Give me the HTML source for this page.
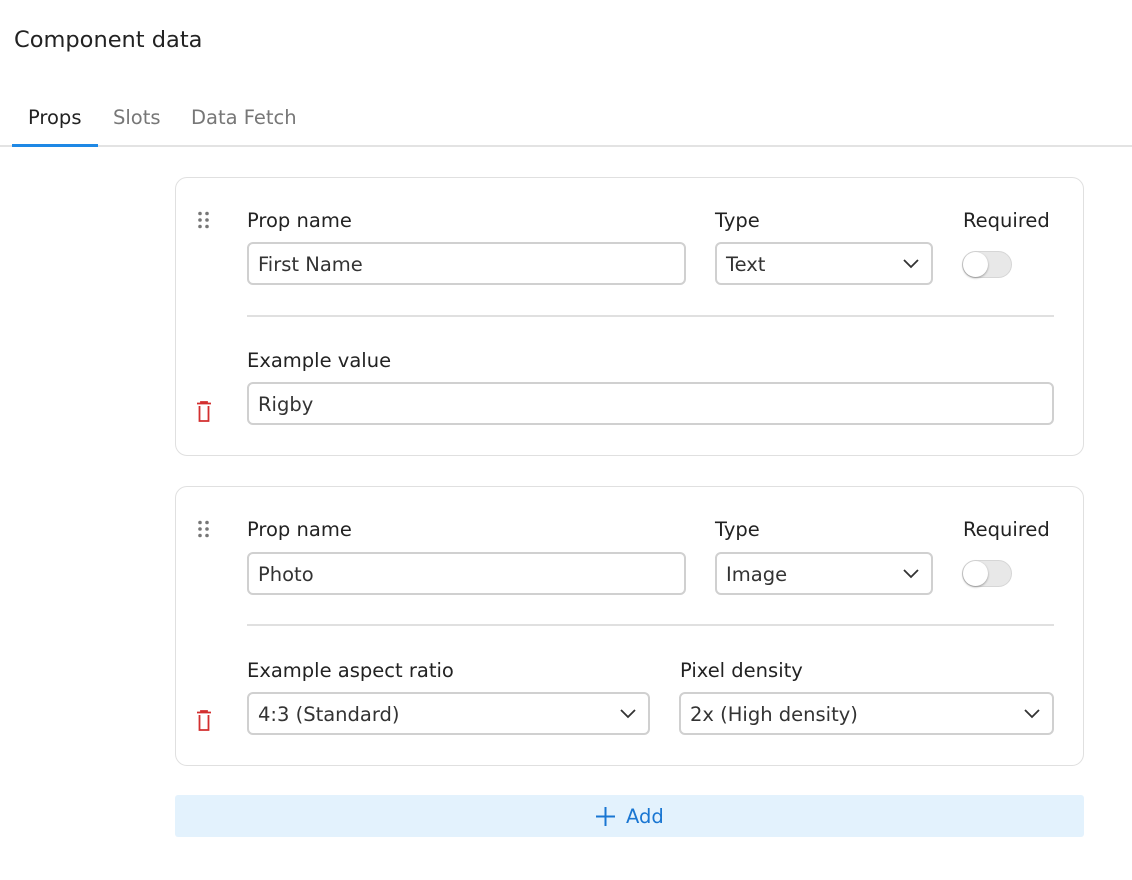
<!DOCTYPE html>
<html><head><meta charset="utf-8"><style>
*{box-sizing:border-box;margin:0;padding:0}
body{width:1132px;height:880px;background:#fff;font-family:"DejaVu Sans","Liberation Sans",sans-serif;color:#222;position:relative;overflow:hidden}
.a{position:absolute}
.t{font-size:19.5px;line-height:24px;white-space:nowrap}
.card{position:absolute;left:175px;width:909px;border:1px solid #e0e0e0;border-radius:12px}
.inp{position:absolute;border:2px solid #d0d0d0;border-radius:6px;height:43px;font-size:19.5px;line-height:41px;padding-left:9px;color:#333}
.chev{position:absolute;right:12px;top:15px}
.tog{position:absolute;width:50px;height:27px;border-radius:14px;background:#e8e8e8;border:1px solid #d6d6d6}
.tog:after{content:"";position:absolute;left:0;top:0;width:25px;height:25px;border-radius:50%;background:#fff;box-shadow:0 1px 2px rgba(0,0,0,.35)}
.hr{position:absolute;left:247px;width:807px;height:2px;background:#e0e0e0}
</style></head><body>
<div class="a t" style="left:14px;top:28px;font-size:22.5px">Component data</div>
<div class="a t" style="left:28px;top:106px">Props</div>
<div class="a t" style="left:113px;top:106px;color:#777">Slots</div>
<div class="a t" style="left:191px;top:106px;color:#777">Data Fetch</div>
<div class="a" style="left:0;top:145px;width:1132px;height:2px;background:#e3e3e3"></div>
<div class="a" style="left:12px;top:144px;width:86px;height:3px;background:#1e88e5"></div>

<div class="card" style="top:177px;height:279px"></div>
<svg class="a" style="left:197px;top:211px" width="14" height="18"><g fill="#777"><circle cx="3" cy="2.5" r="1.8"/><circle cx="10" cy="2.5" r="1.8"/><circle cx="3" cy="9" r="1.8"/><circle cx="10" cy="9" r="1.8"/><circle cx="3" cy="15.5" r="1.8"/><circle cx="10" cy="15.5" r="1.8"/></g></svg>
<div class="a t" style="left:247px;top:209px">Prop name</div>
<div class="a t" style="left:715px;top:209px">Type</div>
<div class="a t" style="left:963px;top:209px">Required</div>
<div class="inp" style="left:247px;top:242px;width:439px">First Name</div>
<div class="inp" style="left:715px;top:242px;width:218px">Text<svg class="chev" width="16" height="10"><path d="M1 1l7 7 7-7" fill="none" stroke="#333" stroke-width="1.8"/></svg></div>
<div class="tog" style="left:962px;top:251px"></div>
<div class="hr" style="top:315px"></div>
<div class="a t" style="left:247px;top:349px">Example value</div>
<div class="inp" style="left:247px;top:382px;width:807px">Rigby</div>
<svg class="a" style="left:194px;top:400px" width="20" height="24"><path d="M3 3.5h14M7 3.5V2h6v1.5M5.5 6v15h9V6" fill="none" stroke="#d32f2f" stroke-width="1.8"/></svg>

<div class="card" style="top:486px;height:280px"></div>
<svg class="a" style="left:197px;top:520px" width="14" height="18"><g fill="#777"><circle cx="3" cy="2.5" r="1.8"/><circle cx="10" cy="2.5" r="1.8"/><circle cx="3" cy="9" r="1.8"/><circle cx="10" cy="9" r="1.8"/><circle cx="3" cy="15.5" r="1.8"/><circle cx="10" cy="15.5" r="1.8"/></g></svg>
<div class="a t" style="left:247px;top:518px">Prop name</div>
<div class="a t" style="left:715px;top:518px">Type</div>
<div class="a t" style="left:963px;top:518px">Required</div>
<div class="inp" style="left:247px;top:552px;width:439px">Photo</div>
<div class="inp" style="left:715px;top:552px;width:218px">Image<svg class="chev" width="16" height="10"><path d="M1 1l7 7 7-7" fill="none" stroke="#333" stroke-width="1.8"/></svg></div>
<div class="tog" style="left:962px;top:560px"></div>
<div class="hr" style="top:624px"></div>
<div class="a t" style="left:247px;top:659px">Example aspect ratio</div>
<div class="a t" style="left:680px;top:659px">Pixel density</div>
<div class="inp" style="left:247px;top:692px;width:403px">4:3 (Standard)<svg class="chev" width="16" height="10"><path d="M1 1l7 7 7-7" fill="none" stroke="#333" stroke-width="1.8"/></svg></div>
<div class="inp" style="left:679px;top:692px;width:375px">2x (High density)<svg class="chev" width="16" height="10"><path d="M1 1l7 7 7-7" fill="none" stroke="#333" stroke-width="1.8"/></svg></div>
<svg class="a" style="left:194px;top:709px" width="20" height="24"><path d="M3 3.5h14M7 3.5V2h6v1.5M5.5 6v15h9V6" fill="none" stroke="#d32f2f" stroke-width="1.8"/></svg>

<div class="a" style="left:175px;top:795px;width:909px;height:42px;background:#e3f2fd;border-radius:3px"></div>
<svg class="a" style="left:595px;top:806px" width="21" height="21"><path d="M10.5 1v19M1 10.5h19" stroke="#1976d2" stroke-width="2"/></svg>
<div class="a t" style="left:626px;top:805px;color:#1976d2">Add</div>
</body></html>
